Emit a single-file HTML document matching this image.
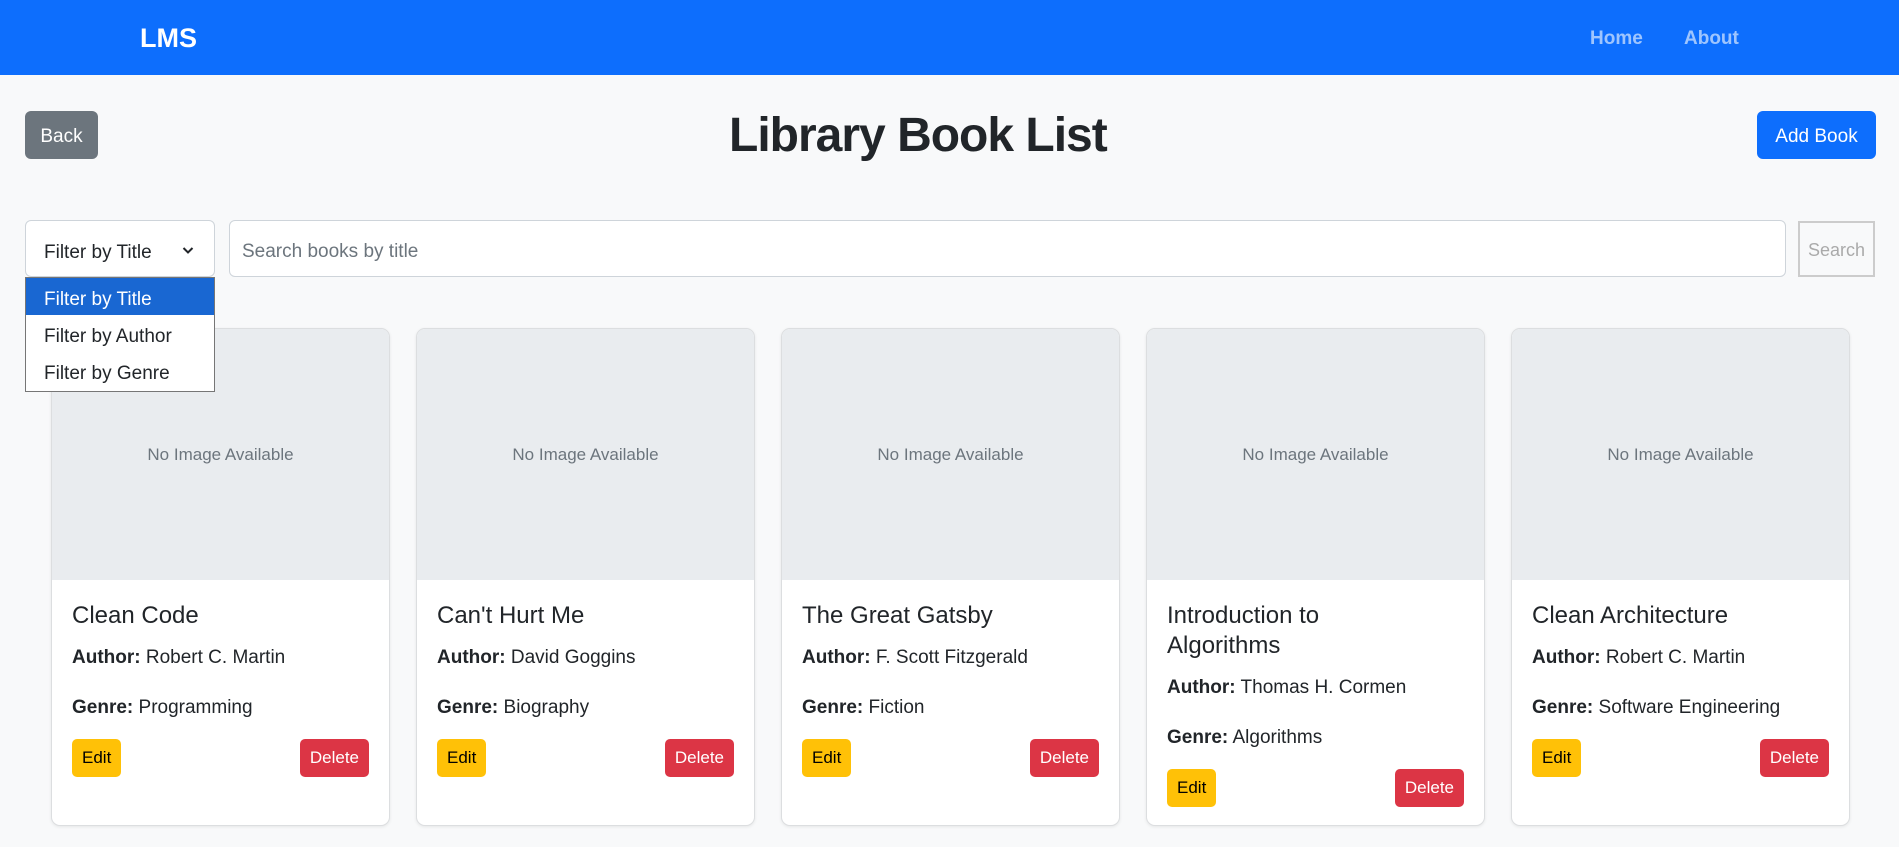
<!DOCTYPE html>
<html><head><meta charset="utf-8"><style>
*{box-sizing:border-box;margin:0;padding:0}
body{width:1899px;height:847px;overflow:hidden;background:#f8f9fa;font-family:"Liberation Sans",sans-serif;color:#212529;font-size:19px;position:relative}
.nav{height:75px;background:#0d6efd;position:relative}
.brand{position:absolute;left:140px;top:23px;color:#fff;font-weight:bold;font-size:27px}
.nl{position:absolute;top:28px;color:rgba(255,255,255,.6);font-weight:bold;font-size:19px}
.btn{position:absolute;border-radius:6px;color:#fff;display:flex;align-items:center;justify-content:center;font-size:19px;padding-top:4px}
h1{position:absolute;left:729px;top:108px;font-size:48px;font-weight:bold;letter-spacing:-1px;white-space:nowrap;color:#212529}
.sel{position:absolute;left:25px;top:220px;width:190px;height:57px;background:#fff;border:1px solid #ced4da;border-radius:6px;padding:21px 0 0 18px}
.inp{position:absolute;left:229px;top:220px;width:1557px;height:57px;background:#fff;border:1px solid #ced4da;border-radius:6px;padding:20px 0 0 12px;color:#6c757d}
.sb{position:absolute;left:1798px;top:221px;width:77px;height:56px;border:2px solid #ccc;background:#f8f9fa;color:#aaa;font-size:18px;display:flex;align-items:center;justify-content:center;padding-top:2px}
.dd{position:absolute;left:25px;top:277px;width:190px;height:115px;background:#fff;border:1px solid #767676;z-index:5}
.dd div{height:37px;padding:11px 0 0 18px}
.card{position:absolute;top:328px;width:339px;height:498px;background:#fff;border:1px solid #dcdee0;border-radius:9px;overflow:hidden;box-shadow:0 1px 3px rgba(0,0,0,.08)}
.img{height:251px;background:#e9ecef;display:flex;align-items:center;justify-content:center;color:#6c757d;font-size:17px}
.bd{padding:21px 20px;position:relative}
.t{font-size:24px;font-weight:500;line-height:30px;margin-bottom:12px}
.p{line-height:29px;margin-bottom:21px;font-size:19px}
.bs{display:flex;justify-content:space-between;margin-top:-4px}
.e,.d{height:38px;border-radius:5px;font-size:17px;display:flex;align-items:center;padding:0 10px}
.e{background:#ffc107;color:#000}.d{background:#dc3545;color:#fff}
</style></head><body>
<div class="nav"><div class="brand">LMS</div><div class="nl" style="left:1590px">Home</div><div class="nl" style="left:1684px">About</div></div>
<div class="btn" style="left:25px;top:111px;width:73px;height:48px;background:#6c757d">Back</div>
<h1>Library Book List</h1>
<div class="btn" style="left:1757px;top:111px;width:119px;height:48px;background:#0d6efd">Add Book</div>
<div class="sel">Filter by Title<svg style="position:absolute;right:20px;top:25px" width="12" height="9" viewBox="0 0 12 9"><path d="M1.5 2 L6 6.5 L10.5 2" fill="none" stroke="#212529" stroke-width="2"/></svg></div>
<div class="inp">Search books by title</div>
<div class="sb">Search</div>
<div class="dd"><div style="background:#1967d2;color:#fff">Filter by Title</div><div>Filter by Author</div><div>Filter by Genre</div></div>

<div class="card" style="left:51px"><div class="img">No Image Available</div><div class="bd"><div class="t">Clean Code</div><div class="p"><b>Author:</b> Robert C. Martin</div><div class="p"><b>Genre:</b> Programming</div><div class="bs"><div class="e">Edit</div><div class="d">Delete</div></div></div></div>
<div class="card" style="left:416px"><div class="img">No Image Available</div><div class="bd"><div class="t">Can't Hurt Me</div><div class="p"><b>Author:</b> David Goggins</div><div class="p"><b>Genre:</b> Biography</div><div class="bs"><div class="e">Edit</div><div class="d">Delete</div></div></div></div>
<div class="card" style="left:781px"><div class="img">No Image Available</div><div class="bd"><div class="t">The Great Gatsby</div><div class="p"><b>Author:</b> F. Scott Fitzgerald</div><div class="p"><b>Genre:</b> Fiction</div><div class="bs"><div class="e">Edit</div><div class="d">Delete</div></div></div></div>
<div class="card" style="left:1146px"><div class="img">No Image Available</div><div class="bd"><div class="t">Introduction to<br>Algorithms</div><div class="p"><b>Author:</b> Thomas H. Cormen</div><div class="p"><b>Genre:</b> Algorithms</div><div class="bs"><div class="e">Edit</div><div class="d">Delete</div></div></div></div>
<div class="card" style="left:1511px"><div class="img">No Image Available</div><div class="bd"><div class="t">Clean Architecture</div><div class="p"><b>Author:</b> Robert C. Martin</div><div class="p"><b>Genre:</b> Software Engineering</div><div class="bs"><div class="e">Edit</div><div class="d">Delete</div></div></div></div>
</body></html>
